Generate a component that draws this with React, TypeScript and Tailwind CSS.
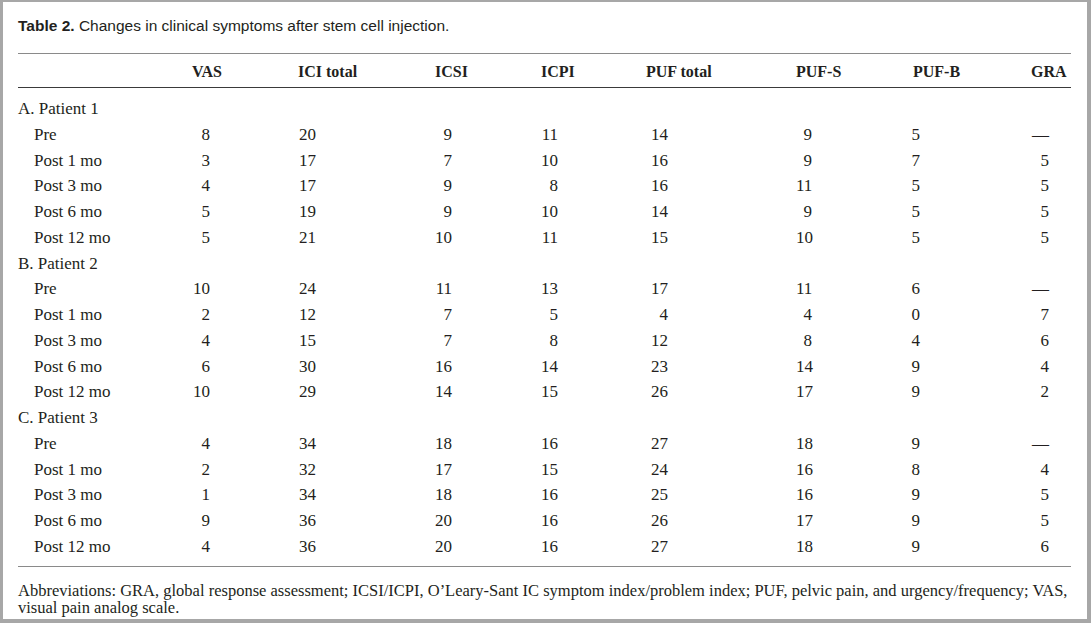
import React from "react";

type Col = { name: string; track: string; numCls: string };

const cols: Col[] = [
  { name: "VAS", track: "106px", numCls: "w-[18px]" },
  { name: "ICI total", track: "137px", numCls: "w-[18px]" },
  { name: "ICSI", track: "106px", numCls: "w-[17px]" },
  { name: "ICPI", track: "105px", numCls: "w-[17px]" },
  { name: "PUF total", track: "150px", numCls: "w-[22px]" },
  { name: "PUF-S", track: "117px", numCls: "w-[16px]" },
  { name: "PUF-B", track: "118px", numCls: "w-[20px] ml-[-13px]" },
  { name: "GRA", track: "40px", numCls: "w-[18px]" },
];

type Group = { label: string; rows: [string, (number | string)[]][] };

const D = "—";

const groups: Group[] = [
  {
    label: "A. Patient 1",
    rows: [
      ["Pre", [8, 20, 9, 11, 14, 9, 5, D]],
      ["Post 1 mo", [3, 17, 7, 10, 16, 9, 7, 5]],
      ["Post 3 mo", [4, 17, 9, 8, 16, 11, 5, 5]],
      ["Post 6 mo", [5, 19, 9, 10, 14, 9, 5, 5]],
      ["Post 12 mo", [5, 21, 10, 11, 15, 10, 5, 5]],
    ],
  },
  {
    label: "B. Patient 2",
    rows: [
      ["Pre", [10, 24, 11, 13, 17, 11, 6, D]],
      ["Post 1 mo", [2, 12, 7, 5, 4, 4, 0, 7]],
      ["Post 3 mo", [4, 15, 7, 8, 12, 8, 4, 6]],
      ["Post 6 mo", [6, 30, 16, 14, 23, 14, 9, 4]],
      ["Post 12 mo", [10, 29, 14, 15, 26, 17, 9, 2]],
    ],
  },
  {
    label: "C. Patient 3",
    rows: [
      ["Pre", [4, 34, 18, 16, 27, 18, 9, D]],
      ["Post 1 mo", [2, 32, 17, 15, 24, 16, 8, 4]],
      ["Post 3 mo", [1, 34, 18, 16, 25, 16, 9, 5]],
      ["Post 6 mo", [9, 36, 20, 16, 26, 17, 9, 5]],
      ["Post 12 mo", [4, 36, 20, 16, 27, 18, 9, 6]],
    ],
  },
];

const gridCls =
  "grid grid-cols-[174px_106px_137px_106px_105px_150px_117px_118px_40px]";

export default function App() {
  return (
    <div
      className="w-[1091px] h-[623px] bg-white border-[#a7a7a7] border-t-2 border-l-[3px] border-r-4 border-b-4 pl-[15px] text-[#231f20] flex flex-col"
      style={{ fontFamily: '"Liberation Serif", serif' }}
    >
      <div
        className="mt-[14px] h-[20px] leading-[20px] text-[15.5px] text-[#231f20]"
        style={{ fontFamily: '"Liberation Sans", Arial, sans-serif' }}
      >
        <span className="font-bold">Table 2.</span> Changes in clinical symptoms after stem cell injection.
      </div>

      <div className="mt-[17px] w-[1053px]">
        <div className="border-t-[1.5px] border-[#8a8a8a]" />
        <div className={`${gridCls} h-[34px] pt-[3px] items-center border-b-[1.5px] border-[#3a3a3a] text-[16px] font-bold`}>
          <div />
          {cols.map((c) => (
            <div key={c.name} className="whitespace-nowrap">
              {c.name}
            </div>
          ))}
        </div>

        <div className="pt-[8px] pb-[6px] border-b-[1.5px] border-[#8a8a8a] text-[17px]">
          {groups.map((g) => (
            <React.Fragment key={g.label}>
              <div className="h-[25.76px] leading-[25.76px]">{g.label}</div>
              {g.rows.map(([label, vals]) => (
                <div key={g.label + label} className={`${gridCls} h-[25.76px] leading-[25.76px]`}>
                  <div className="pl-[16px] whitespace-nowrap">{label}</div>
                  {vals.map((v, i) => (
                    <div key={i}>
                      <div className={`${cols[i].numCls} text-right whitespace-nowrap`}>{v}</div>
                    </div>
                  ))}
                </div>
              ))}
            </React.Fragment>
          ))}
        </div>

        <div className="mt-[15px] text-[16.5px] leading-[17px] whitespace-nowrap">
          Abbreviations: GRA, global response assessment; ICSI/ICPI, O’Leary-Sant IC symptom index/problem index; PUF, pelvic pain, and urgency/frequency; VAS,
          <br />
          visual pain analog scale.
        </div>
      </div>
    </div>
  );
}
